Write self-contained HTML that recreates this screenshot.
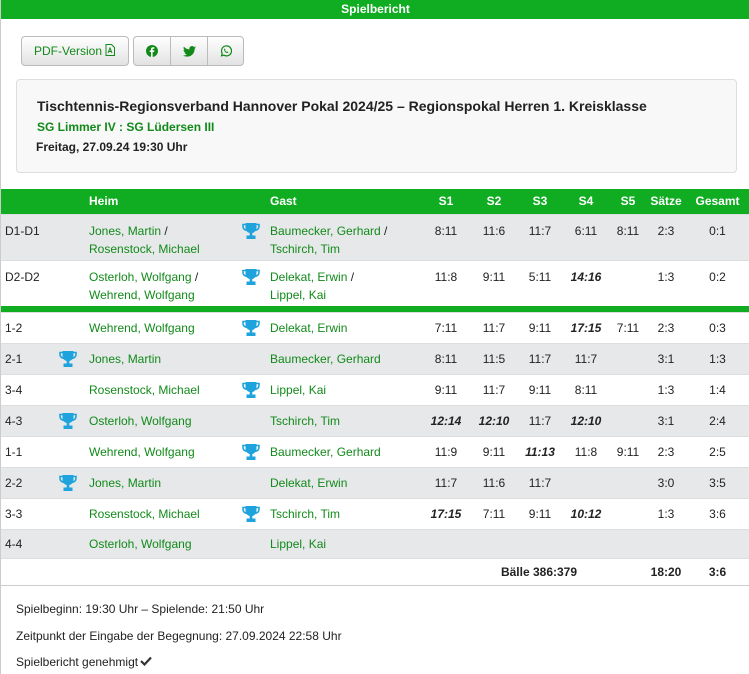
<!DOCTYPE html>
<html><head><meta charset="utf-8"><style>
*{box-sizing:border-box;margin:0;padding:0}
body{width:749px;height:674px;overflow:hidden;background:#fff;font-family:"Liberation Sans",Arial,sans-serif;font-size:12px;color:#222;position:relative;border-left:1px solid #ccc}
.top{position:absolute;left:0;top:0;width:749px;height:19px;background:#10ac22;color:#fff;font-weight:bold;text-align:center;line-height:18px;font-size:12px}
.btn{position:absolute;top:36px;height:30px;border:1px solid #bbb;border-radius:4px;background:linear-gradient(#fff,#e2e2e2);color:#128a1a;font-size:12px;line-height:28px}
.box{position:absolute;left:15px;top:79px;width:721px;height:94px;border:1px solid #ddd;border-radius:4px;background:#f8f8f8}
table{position:absolute;left:0;top:189px;width:749px;border-collapse:collapse;table-layout:fixed}
td,th{padding:0;white-space:nowrap;vertical-align:middle}
th{background:#10ac22;color:#fff;height:25px;font-weight:bold;text-align:center}
tr.r td{height:31px;border-top:1px solid #ddd}
tr.r.s29 td{height:29px}
tr.r.s27 td{height:27px}
tr.d td{height:46px;border-top:1px solid #ddd;vertical-align:top;padding-top:7px;line-height:18px}
tr.g td{background:#e6e8e9}
td.c{text-align:center}
td.l{padding-left:4px}
a{color:#128a1a;text-decoration:none}
b i,i b{font-weight:bold}
.sep td{height:6px;background:#10ac22;padding:0}
.tr{display:block;margin:0 auto}
.foot{position:absolute;left:15px;font-size:12px}
</style></head><body>
<div class="top">Spielbericht</div>
<div class="btn" style="left:20px;width:108px;padding-left:12px">PDF-Version <svg width="10" height="12" viewBox="0 0 10 12" style="vertical-align:-1px"><path d="M1 .5h5.5l3 3V11.5H1z" fill="none" stroke="#128a1a"/><path d="M3 9l2-5 2 5M3.6 7.5h2.8" fill="none" stroke="#128a1a"/></svg></div>
<div class="btn" style="left:132px;width:111px">
<span style="position:absolute;left:0;top:0;width:37px;height:28px;border-right:1px solid #bbb"><svg width="12" height="12" viewBox="0 0 12 12" style="position:absolute;left:12px;top:8px"><circle cx="6" cy="6" r="6" fill="#128a1a"/><path d="M6.6 12V7h1.5l.3-1.6H6.6V4.5c0-.5.2-.8.8-.8h.9V2.3h-1.3c-1.4 0-2 .8-2 2v1.1H3.8V7H5v5z" fill="#fff"/></svg></span>
<span style="position:absolute;left:37px;top:0;width:37px;height:28px;border-right:1px solid #bbb"><svg width="13" height="11" viewBox="0 0 24 20" style="position:absolute;left:12px;top:9px"><path d="M24 2.4a10 10 0 0 1-2.8.8A5 5 0 0 0 23.3.4a10 10 0 0 1-3.1 1.2A4.9 4.9 0 0 0 11.8 6 14 14 0 0 1 1.7.9a4.9 4.9 0 0 0 1.5 6.6A4.9 4.9 0 0 1 1 6.9a4.9 4.9 0 0 0 3.9 4.8 5 5 0 0 1-2.2.1 4.9 4.9 0 0 0 4.6 3.4A9.9 9.9 0 0 1 0 17.3 14 14 0 0 0 7.5 19.5c9.1 0 14-7.5 14-14v-.6A10 10 0 0 0 24 2.4z" fill="#128a1a"/></svg></span>
<span style="position:absolute;left:74px;top:0;width:35px;height:28px"><svg width="12" height="12" viewBox="0 0 12 12" style="position:absolute;left:12px;top:8px"><path d="M1.5 10.8l.7-2.4A5 5 0 1 1 4 10.2z" fill="none" stroke="#128a1a" stroke-width="1.2"/><path d="M4.3 3.8c.3-.3.6-.2.7 0l.4.9c0 .2-.3.5-.3.6.3.7.9 1.3 1.6 1.6.1 0 .4-.4.6-.4l.9.5c.1.2 0 .6-.3.8-.6.4-1.7.1-2.6-.7S3.8 4.5 4.3 3.8z" fill="#128a1a"/></svg></span>
</div>
<div class="box">
<div style="position:absolute;left:20px;top:18px;font-size:14px;font-weight:bold;color:#222">Tischtennis-Regionsverband Hannover Pokal 2024/25 – Regionspokal Herren 1. Kreisklasse</div>
<div style="position:absolute;left:20px;top:40px;font-weight:bold;color:#128a1a">SG Limmer IV : SG Lüdersen III</div>
<div style="position:absolute;left:19px;top:60px;font-weight:bold;color:#222">Freitag, 27.09.24 19:30 Uhr</div>
</div>
<svg width="0" height="0" style="position:absolute"><defs><symbol id="t" viewBox="0 0 18 18"><path d="M3.5 1h11v4.5c0 3-2 5-4.2 5.5V13.5h3.2V17h-9v-3.5h3.2V11C5.5 10.5 3.5 8.5 3.5 5.5z" fill="#1ea3dc"/><path d="M4 2.5H1v1.8c0 2.2 1.6 3.6 3.6 4M14 2.5h3v1.8c0 2.2-1.6 3.6-3.6 4" fill="none" stroke="#1ea3dc" stroke-width="1.6"/></symbol></defs></svg>
<table>
<colgroup><col style="width:50px"><col style="width:34px"><col style="width:150px"><col style="width:31px"><col style="width:155px"><col style="width:50px"><col style="width:46px"><col style="width:46px"><col style="width:46px"><col style="width:38px"><col style="width:38px"><col style="width:65px"></colgroup>
<tr><th></th><th></th><th style="text-align:left;padding-left:4px">Heim</th><th></th><th style="text-align:left;padding-left:4px">Gast</th><th>S1</th><th>S2</th><th>S3</th><th>S4</th><th>S5</th><th>Sätze</th><th>Gesamt</th></tr>
<tr class="d g"><td class="l">D1-D1</td><td></td><td class="l"><a>Jones, Martin</a> /<br><a>Rosenstock, Michael</a></td><td><svg class="tr" width="18" height="18"><use href="#t"/></svg></td><td class="l"><a>Baumecker, Gerhard</a> /<br><a>Tschirch, Tim</a></td><td class="c">8:11</td><td class="c">11:6</td><td class="c">11:7</td><td class="c">6:11</td><td class="c">8:11</td><td class="c">2:3</td><td class="c">0:1</td></tr>
<tr class="d"><td class="l">D2-D2</td><td></td><td class="l"><a>Osterloh, Wolfgang</a> /<br><a>Wehrend, Wolfgang</a></td><td><svg class="tr" width="18" height="18"><use href="#t"/></svg></td><td class="l"><a>Delekat, Erwin</a> /<br><a>Lippel, Kai</a></td><td class="c">11:8</td><td class="c">9:11</td><td class="c">5:11</td><td class="c"><b><i>14:16</i></b></td><td class="c"></td><td class="c">1:3</td><td class="c">0:2</td></tr>
<tr class="sep"><td colspan="12"></td></tr>
<tr class="r"><td class="l">1-2</td><td></td><td class="l"><a>Wehrend, Wolfgang</a></td><td><svg class="tr" width="18" height="18"><use href="#t"/></svg></td><td class="l"><a>Delekat, Erwin</a></td><td class="c">7:11</td><td class="c">11:7</td><td class="c">9:11</td><td class="c"><b><i>17:15</i></b></td><td class="c">7:11</td><td class="c">2:3</td><td class="c">0:3</td></tr>
<tr class="r g"><td class="l">2-1</td><td><svg class="tr" width="18" height="18"><use href="#t"/></svg></td><td class="l"><a>Jones, Martin</a></td><td></td><td class="l"><a>Baumecker, Gerhard</a></td><td class="c">8:11</td><td class="c">11:5</td><td class="c">11:7</td><td class="c">11:7</td><td class="c"></td><td class="c">3:1</td><td class="c">1:3</td></tr>
<tr class="r"><td class="l">3-4</td><td></td><td class="l"><a>Rosenstock, Michael</a></td><td><svg class="tr" width="18" height="18"><use href="#t"/></svg></td><td class="l"><a>Lippel, Kai</a></td><td class="c">9:11</td><td class="c">11:7</td><td class="c">9:11</td><td class="c">8:11</td><td class="c"></td><td class="c">1:3</td><td class="c">1:4</td></tr>
<tr class="r g"><td class="l">4-3</td><td><svg class="tr" width="18" height="18"><use href="#t"/></svg></td><td class="l"><a>Osterloh, Wolfgang</a></td><td></td><td class="l"><a>Tschirch, Tim</a></td><td class="c"><b><i>12:14</i></b></td><td class="c"><b><i>12:10</i></b></td><td class="c">11:7</td><td class="c"><b><i>12:10</i></b></td><td class="c"></td><td class="c">3:1</td><td class="c">2:4</td></tr>
<tr class="r"><td class="l">1-1</td><td></td><td class="l"><a>Wehrend, Wolfgang</a></td><td><svg class="tr" width="18" height="18"><use href="#t"/></svg></td><td class="l"><a>Baumecker, Gerhard</a></td><td class="c">11:9</td><td class="c">9:11</td><td class="c"><b><i>11:13</i></b></td><td class="c">11:8</td><td class="c">9:11</td><td class="c">2:3</td><td class="c">2:5</td></tr>
<tr class="r g"><td class="l">2-2</td><td><svg class="tr" width="18" height="18"><use href="#t"/></svg></td><td class="l"><a>Jones, Martin</a></td><td></td><td class="l"><a>Delekat, Erwin</a></td><td class="c">11:7</td><td class="c">11:6</td><td class="c">11:7</td><td class="c"></td><td class="c"></td><td class="c">3:0</td><td class="c">3:5</td></tr>
<tr class="r"><td class="l">3-3</td><td></td><td class="l"><a>Rosenstock, Michael</a></td><td><svg class="tr" width="18" height="18"><use href="#t"/></svg></td><td class="l"><a>Tschirch, Tim</a></td><td class="c"><b><i>17:15</i></b></td><td class="c">7:11</td><td class="c">9:11</td><td class="c"><b><i>10:12</i></b></td><td class="c"></td><td class="c">1:3</td><td class="c">3:6</td></tr>
<tr class="r g s29"><td class="l">4-4</td><td></td><td class="l"><a>Osterloh, Wolfgang</a></td><td></td><td class="l"><a>Lippel, Kai</a></td><td></td><td></td><td></td><td></td><td></td><td></td><td></td></tr>
<tr class="r s27"><td colspan="5"></td><td colspan="5" class="c" style="font-weight:bold;padding-left:10px;padding-right:0">Bälle 386:379</td><td class="c" style="font-weight:bold">18:20</td><td class="c" style="font-weight:bold">3:6</td></tr>
<tr><td colspan="12" style="border-top:1px solid #ccc;height:1px"></td></tr>
</table>
<div class="foot" style="top:602px">Spielbeginn: 19:30 Uhr – Spielende: 21:50 Uhr</div>
<div class="foot" style="top:629px">Zeitpunkt der Eingabe der Begegnung: 27.09.2024 22:58 Uhr</div>
<div class="foot" style="top:655px">Spielbericht genehmigt<svg width="12" height="10" viewBox="0 0 12 10" style="margin-left:2px"><path d="M1 5l3.5 3.5L11 1.5" fill="none" stroke="#333" stroke-width="2.2"/></svg></div>
</body></html>
